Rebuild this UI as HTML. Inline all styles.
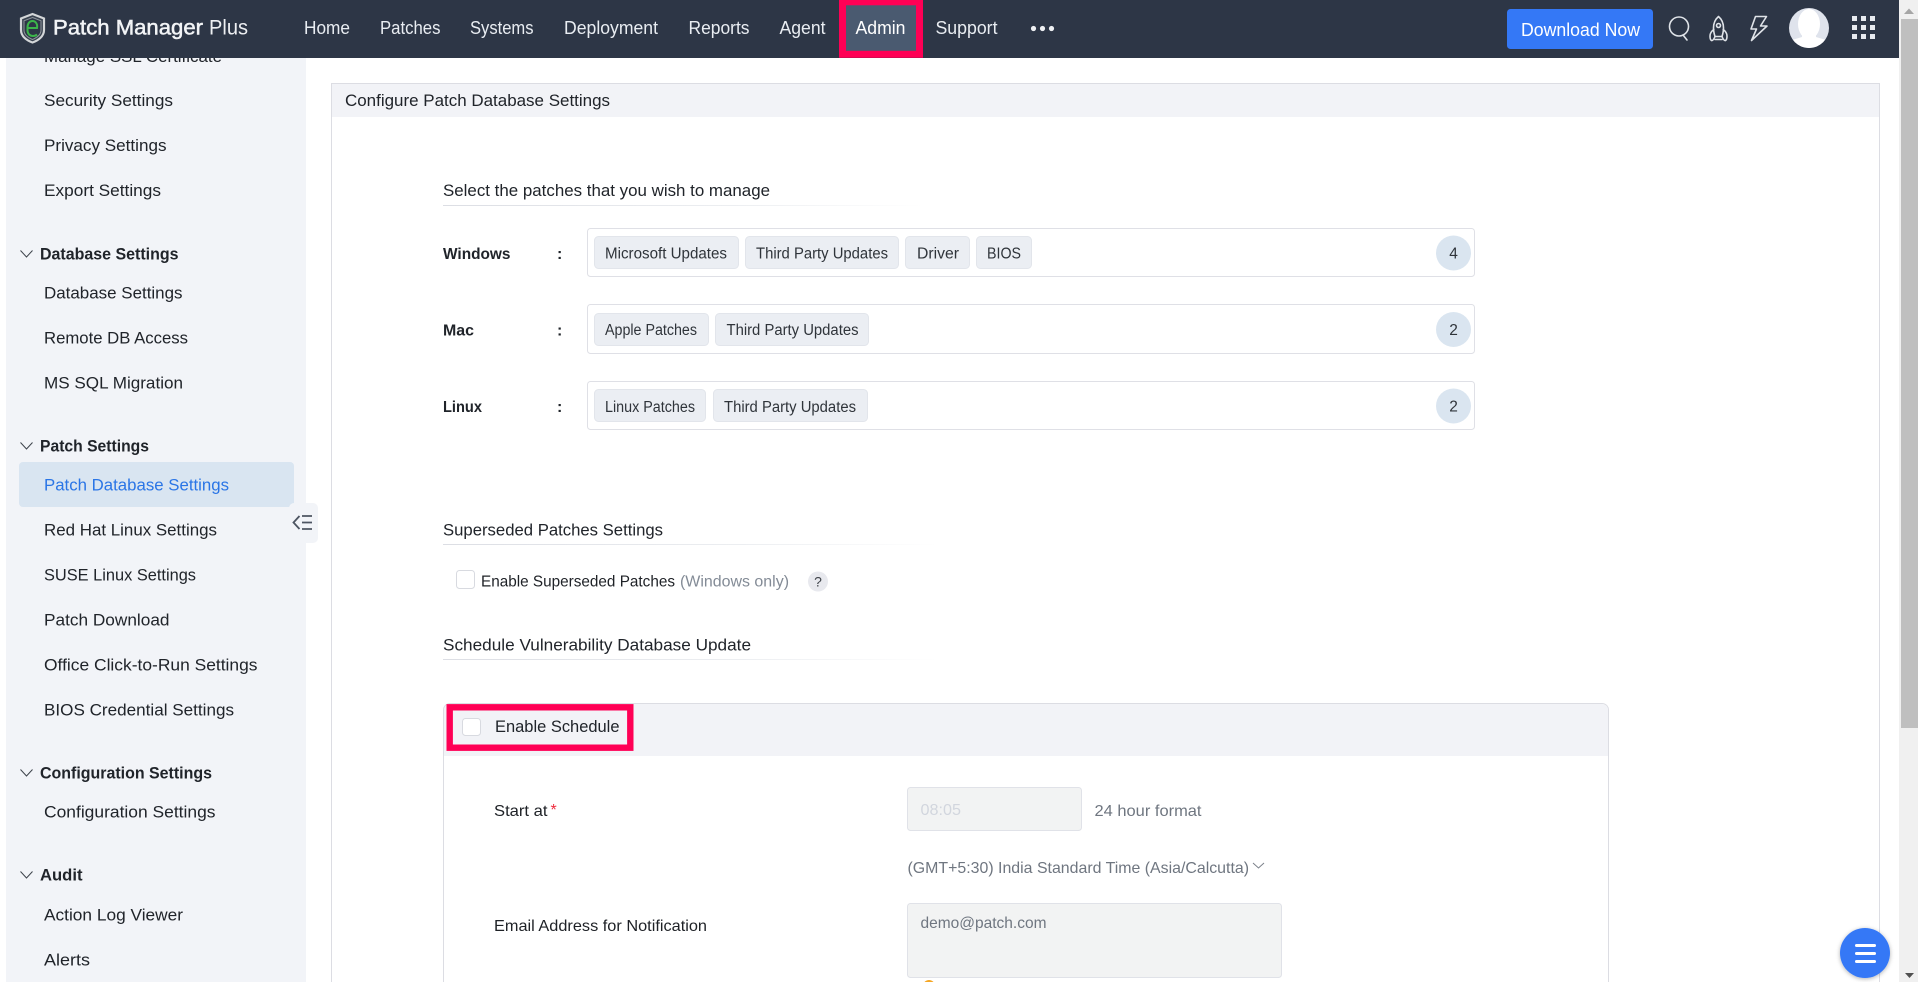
<!DOCTYPE html>
<html lang="en">
<head>
<meta charset="utf-8">
<title>Patch Manager Plus</title>
<style>
html,body{margin:0;padding:0;width:1918px;height:982px;overflow:hidden;background:#fff}
svg{display:block}
text{font-family:"Liberation Sans",sans-serif;font-size:17px;fill:#20242a}
.nav{font-size:18px;fill:#e9edf2}
.b{font-weight:bold}
.t{font-size:15.5px;fill:#2f343a}
.g{fill:#6f7680;font-size:16px}
.f{font-size:16px;fill:#1e2126}
</style>
</head>
<body>
<svg xmlns="http://www.w3.org/2000/svg" width="1918" height="982" viewBox="0 0 1918 982">
<defs>
<linearGradient id="u" x1="0" x2="1" y1="0" y2="0"><stop offset="0" stop-color="#dcdee4"/><stop offset=".6" stop-color="#eceef1"/><stop offset="1" stop-color="#fff"/></linearGradient>
<clipPath id="av"><circle cx="1809" cy="28" r="20"/></clipPath>
<filter id="sh" x="-30%" y="-30%" width="160%" height="160%"><feDropShadow dx="0" dy="1" stdDeviation="2" flood-color="#000" flood-opacity=".3"/></filter>
</defs>

<!-- sidebar -->
<rect x="6" y="58" width="300" height="924" fill="#f2f4f8"/>
<text x="44" y="62" textLength="178" lengthAdjust="spacingAndGlyphs">Manage SSL Certificate</text>
<text x="44" y="106" textLength="129" lengthAdjust="spacingAndGlyphs">Security Settings</text>
<text x="44" y="151" textLength="122.500" lengthAdjust="spacingAndGlyphs">Privacy Settings</text>
<text x="44" y="196" textLength="117" lengthAdjust="spacingAndGlyphs">Export Settings</text>
<text x="40" y="259.500" textLength="138.500" lengthAdjust="spacingAndGlyphs" class="b">Database Settings</text>
<text x="44" y="298.500" textLength="138.500" lengthAdjust="spacingAndGlyphs">Database Settings</text>
<text x="44" y="343.500" textLength="144" lengthAdjust="spacingAndGlyphs">Remote DB Access</text>
<text x="44" y="388.500" textLength="139" lengthAdjust="spacingAndGlyphs">MS SQL Migration</text>
<text x="40" y="451.500" textLength="109" lengthAdjust="spacingAndGlyphs" class="b">Patch Settings</text>
<rect x="19" y="462" width="275" height="45" rx="4" fill="#d9e5f1"/>
<text x="44" y="490.500" textLength="185" lengthAdjust="spacingAndGlyphs" style="fill:#2a75e6">Patch Database Settings</text>
<text x="44" y="535.500" textLength="173" lengthAdjust="spacingAndGlyphs">Red Hat Linux Settings</text>
<text x="44" y="580.500" textLength="152" lengthAdjust="spacingAndGlyphs">SUSE Linux Settings</text>
<text x="44" y="625.500" textLength="125.500" lengthAdjust="spacingAndGlyphs">Patch Download</text>
<text x="44" y="670.500" textLength="213.500" lengthAdjust="spacingAndGlyphs">Office Click-to-Run Settings</text>
<text x="44" y="715.500" textLength="190" lengthAdjust="spacingAndGlyphs">BIOS Credential Settings</text>
<text x="40" y="778.500" textLength="172" lengthAdjust="spacingAndGlyphs" class="b">Configuration Settings</text>
<text x="44" y="817.500" textLength="171.500" lengthAdjust="spacingAndGlyphs">Configuration Settings</text>
<text x="40" y="880.500" textLength="42.500" lengthAdjust="spacingAndGlyphs" class="b">Audit</text>
<text x="44" y="920.500" textLength="139" lengthAdjust="spacingAndGlyphs">Action Log Viewer</text>
<text x="44" y="965.500" textLength="46" lengthAdjust="spacingAndGlyphs">Alerts</text>
<g fill="none" stroke="#3d434b" stroke-width="1">
<path d="M20.500 250.500l6 6.500 6-6.500"/>
<path d="M20.500 442.500l6 6.500 6-6.500"/>
<path d="M20.500 769.500l6 6.500 6-6.500"/>
<path d="M20.500 871.500l6 6.500 6-6.500"/>
</g>
<rect x="289" y="503" width="29" height="40" rx="5" fill="#f2f4f8"/>
<g fill="none" stroke="#4d5562" stroke-width="1.800">
<path d="M299.500 516l-6 6.500 6 6.500"/>
<path d="M302 516h10M302 522.500h10M302 529h10"/>
</g>

<!-- main panel -->
<rect x="331.500" y="83.500" width="1548" height="910" fill="#fff" stroke="#dcdde3"/>
<rect x="332" y="84" width="1547" height="33" fill="#f2f3f7"/>
<text x="345" y="106" textLength="265" lengthAdjust="spacingAndGlyphs">Configure Patch Database Settings</text>

<text x="443" y="196" textLength="327" lengthAdjust="spacingAndGlyphs">Select the patches that you wish to manage</text>
<rect x="443" y="205" width="480" height="1" fill="url(#u)"/>

<!-- Windows -->
<text x="443" y="259" textLength="67.500" lengthAdjust="spacingAndGlyphs" class="b" style="font-size:16px">Windows</text>
<text x="557" y="259" class="b" style="font-size:16px">:</text>
<rect x="587.500" y="228.500" width="887" height="48" rx="3" fill="#fff" stroke="#dfe0e6"/>
<rect x="594.500" y="236.500" width="144" height="32" rx="4" fill="#ebeef3" stroke="#e2e5eb"/>
<text x="605" y="258.500" textLength="122" lengthAdjust="spacingAndGlyphs" class="t">Microsoft Updates</text>
<rect x="745.500" y="236.500" width="153" height="32" rx="4" fill="#ebeef3" stroke="#e2e5eb"/>
<text x="756" y="258.500" textLength="132" lengthAdjust="spacingAndGlyphs" class="t">Third Party Updates</text>
<rect x="905.500" y="236.500" width="64" height="32" rx="4" fill="#ebeef3" stroke="#e2e5eb"/>
<text x="917" y="258.500" textLength="42" lengthAdjust="spacingAndGlyphs" class="t">Driver</text>
<rect x="976.500" y="236.500" width="55" height="32" rx="4" fill="#ebeef3" stroke="#e2e5eb"/>
<text x="987" y="258.500" textLength="34" lengthAdjust="spacingAndGlyphs" class="t">BIOS</text>
<circle cx="1453.500" cy="253" r="17.500" fill="#dae5f0"/>
<text x="1453.500" y="258.500" text-anchor="middle" class="t">4</text>

<!-- Mac -->
<text x="443" y="335.500" textLength="31" lengthAdjust="spacingAndGlyphs" class="b" style="font-size:16px">Mac</text>
<text x="557" y="335.500" class="b" style="font-size:16px">:</text>
<rect x="587.500" y="304.500" width="887" height="49" rx="3" fill="#fff" stroke="#dfe0e6"/>
<rect x="594.500" y="313.500" width="114" height="32" rx="4" fill="#ebeef3" stroke="#e2e5eb"/>
<text x="605" y="335" textLength="92" lengthAdjust="spacingAndGlyphs" class="t">Apple Patches</text>
<rect x="715.500" y="313.500" width="153" height="32" rx="4" fill="#ebeef3" stroke="#e2e5eb"/>
<text x="726.500" y="335" textLength="132" lengthAdjust="spacingAndGlyphs" class="t">Third Party Updates</text>
<circle cx="1453.500" cy="329.500" r="17.500" fill="#dae5f0"/>
<text x="1453.500" y="335" text-anchor="middle" class="t">2</text>

<!-- Linux -->
<text x="443" y="412" textLength="39" lengthAdjust="spacingAndGlyphs" class="b" style="font-size:16px">Linux</text>
<text x="557" y="412" class="b" style="font-size:16px">:</text>
<rect x="587.500" y="381.500" width="887" height="48" rx="3" fill="#fff" stroke="#dfe0e6"/>
<rect x="594.500" y="389.500" width="111" height="32" rx="4" fill="#ebeef3" stroke="#e2e5eb"/>
<text x="605" y="412" textLength="90" lengthAdjust="spacingAndGlyphs" class="t">Linux Patches</text>
<rect x="713.500" y="389.500" width="154" height="32" rx="4" fill="#ebeef3" stroke="#e2e5eb"/>
<text x="724" y="412" textLength="132" lengthAdjust="spacingAndGlyphs" class="t">Third Party Updates</text>
<circle cx="1453.500" cy="406" r="17.500" fill="#dae5f0"/>
<text x="1453.500" y="411.500" text-anchor="middle" class="t">2</text>

<!-- Superseded -->
<text x="443" y="535.500" textLength="220" lengthAdjust="spacingAndGlyphs">Superseded Patches Settings</text>
<rect x="443" y="544" width="495" height="1" fill="url(#u)"/>
<rect x="456.500" y="570.500" width="18" height="18" rx="3" fill="#fff" stroke="#d8dae0"/>
<text x="481" y="586.500" textLength="194" lengthAdjust="spacingAndGlyphs" class="f">Enable Superseded Patches</text>
<text x="680" y="586.500" textLength="109" lengthAdjust="spacingAndGlyphs" class="g" style="fill:#838b96">(Windows only)</text>
<circle cx="818" cy="581.500" r="10" fill="#e8e9ee"/>
<text x="818" y="586.500" text-anchor="middle" style="font-size:14px;fill:#3f4349">?</text>

<!-- Schedule -->
<text x="443" y="650.500" textLength="308" lengthAdjust="spacingAndGlyphs">Schedule Vulnerability Database Update</text>
<rect x="443" y="659" width="495" height="1" fill="url(#u)"/>

<path d="M443.500 990V710a6.500 6.500 0 0 1 6.500-6.500H1602a6.500 6.500 0 0 1 6.500 6.500V990" fill="#fff" stroke="#dcdde3"/>
<path d="M444 756V710a6 6 0 0 1 6-6H1602a6 6 0 0 1 6 6V756Z" fill="#f2f3f7"/>
<rect x="449.700" y="707.300" width="180.600" height="40.400" fill="none" stroke="#ff0055" stroke-width="6.400"/>
<rect x="462.500" y="718.500" width="18" height="17" rx="3" fill="#fff" stroke="#d8dae0"/>
<text x="495" y="732" textLength="124.500" lengthAdjust="spacingAndGlyphs">Enable Schedule</text>

<text x="494" y="816" textLength="53.500" lengthAdjust="spacingAndGlyphs" class="f">Start at</text>
<text x="550.500" y="815" style="font-size:16px;fill:#ee2a3c">*</text>
<rect x="907.500" y="787.500" width="174" height="43" rx="3" fill="#f2f3f3" stroke="#e0e2e8"/>
<text x="920.500" y="815" textLength="40.500" lengthAdjust="spacingAndGlyphs" style="font-size:16px;fill:#d2d6de">08:05</text>
<text x="1094.500" y="816" textLength="107" lengthAdjust="spacingAndGlyphs" class="g">24 hour format</text>
<text x="907.500" y="873" textLength="341.500" lengthAdjust="spacingAndGlyphs" class="g">(GMT+5:30) India Standard Time (Asia/Calcutta)</text>
<path d="M1253 863l5.500 5 5.500-5" fill="none" stroke="#7b818a" stroke-width="1"/>
<text x="494" y="931" textLength="213" lengthAdjust="spacingAndGlyphs" class="f">Email Address for Notification</text>
<rect x="907.500" y="903.500" width="374" height="74" rx="3" fill="#f2f3f3" stroke="#e0e2e8"/>
<text x="920.500" y="928" textLength="126" lengthAdjust="spacingAndGlyphs" class="g">demo@patch.com</text>
<circle cx="929" cy="986" r="6" fill="#f5a623"/>

<!-- header -->
<rect x="0" y="0" width="1899" height="58" fill="#2d3646"/>
<path d="M32.500 14l11.500 4.500v11.500c0 6.500-6 10.500-11.500 12.500-5.500-2-11.500-6-11.500-12.500V18.500Z" fill="#39424f" stroke="#d3d6d8" stroke-width="2.200"/>
<path d="M32.500 17.500l8.500 3.300v9.200c0 4.800-4.500 7.800-8.500 9.500-4-1.700-8.500-4.700-8.500-9.500v-9.200Z" fill="#2d3646" stroke="#8f969c" stroke-width="1"/>
<path d="M27.500 28h9.500c.8-4-1.500-7-4.500-7s-5 2.500-5 6.500v2.500c0 4 2.500 6 5.500 6 1.500 0 3-.5 4-1.500" fill="none" stroke="#3cb54a" stroke-width="2"/>
<text x="53" y="34.500" textLength="150" lengthAdjust="spacingAndGlyphs" style="font-size:21px;fill:#f2f4f6;stroke:#f2f4f6;stroke-width:.5">Patch Manager</text>
<text x="209" y="34.500" textLength="39" lengthAdjust="spacingAndGlyphs" style="font-size:21px;fill:#eef0f3">Plus</text>

<text x="304" y="34" textLength="46" lengthAdjust="spacingAndGlyphs" class="nav">Home</text>
<text x="380" y="34" textLength="60.500" lengthAdjust="spacingAndGlyphs" class="nav">Patches</text>
<text x="470" y="34" textLength="63.500" lengthAdjust="spacingAndGlyphs" class="nav">Systems</text>
<text x="564" y="34" textLength="94" lengthAdjust="spacingAndGlyphs" class="nav">Deployment</text>
<text x="688.500" y="34" textLength="61" lengthAdjust="spacingAndGlyphs" class="nav">Reports</text>
<text x="779.500" y="34" textLength="46" lengthAdjust="spacingAndGlyphs" class="nav">Agent</text>
<rect x="842.500" y="1.800" width="77" height="52.500" fill="#4a5a70" stroke="#ff0055" stroke-width="7"/>
<text x="855.500" y="34" textLength="50" lengthAdjust="spacingAndGlyphs" class="nav" style="fill:#fff">Admin</text>
<text x="935.500" y="34" textLength="62" lengthAdjust="spacingAndGlyphs" class="nav">Support</text>
<circle cx="1033.500" cy="28.500" r="2.600" fill="#eef0f3"/>
<circle cx="1042.500" cy="28.500" r="2.600" fill="#eef0f3"/>
<circle cx="1051.500" cy="28.500" r="2.600" fill="#eef0f3"/>

<rect x="1507" y="9" width="146" height="40" rx="3.500" fill="#3478f6"/>
<text x="1521" y="36" textLength="119" lengthAdjust="spacingAndGlyphs" style="font-size:18px;fill:#fff">Download Now</text>

<g fill="none" stroke="#dfe3e8" stroke-width="1.600" stroke-linecap="round" stroke-linejoin="round">
<!-- search -->
<circle cx="1679" cy="26.500" r="9.500"/>
<path d="M1683 35l4 5"/>
<!-- rocket -->
<path d="M1718.500 16.500c-3.500 3-5 7-5 11.500 0 3 .7 6 1.500 8.500h7c.8-2.500 1.500-5.500 1.500-8.500 0-4.500-1.500-8.500-5-11.500Z"/>
<circle cx="1718.500" cy="25.500" r="2"/>
<path d="M1713.800 29.500c-2 1.500-3.800 4-3.800 6.500 0 2 .5 4 1.500 4.500 1.500.5 2.500-1.500 3.500-4M1723.200 29.500c2 1.500 3.800 4 3.800 6.500 0 2-.5 4-1.500 4.500-1.500.5-2.500-1.500-3.500-4"/>
<path d="M1715 39.500h7"/>
<!-- bolt -->
<path d="M1755.500 16.500h11l-6 9.500h6.500l-15.500 14.500 5-11.500h-5.500Z"/>
</g>
<!-- avatar -->
<circle cx="1809" cy="28" r="20" fill="#dfe3ec"/>
<g clip-path="url(#av)">
<ellipse cx="1809" cy="24" rx="11" ry="15" fill="#fff"/>
<path d="M1802 32v5l-10 3-5 10h44l-5-10-10-3v-5Z" fill="#fff"/>
</g>
<g fill="#e8ebf0">
<rect x="1852" y="16" width="5" height="5"/><rect x="1861" y="16" width="5" height="5"/><rect x="1870" y="16" width="5" height="5"/>
<rect x="1852" y="25" width="5" height="5"/><rect x="1861" y="25" width="5" height="5"/><rect x="1870" y="25" width="5" height="5"/>
<rect x="1852" y="34" width="5" height="5"/><rect x="1861" y="34" width="5" height="5"/><rect x="1870" y="34" width="5" height="5"/>
</g>

<!-- scrollbar -->
<rect x="1899" y="0" width="19" height="982" fill="#f0f0f0"/>
<rect x="1901" y="19" width="17" height="709" fill="#bfbfbf"/>
<path d="M1904 14l5-5.500 5 5.500Z" fill="#a6a6a6"/>
<path d="M1905 973h9l-4.500 5Z" fill="#505050"/>

<!-- fab -->
<circle cx="1865" cy="953" r="25" fill="#3478f6" filter="url(#sh)"/>
<g fill="#fff">
<rect x="1855" y="944" width="21" height="3" rx="1.500"/>
<rect x="1855" y="952" width="21" height="3" rx="1.500"/>
<rect x="1855" y="960" width="21" height="3" rx="1.500"/>
</g>
</svg>
</body>
</html>
